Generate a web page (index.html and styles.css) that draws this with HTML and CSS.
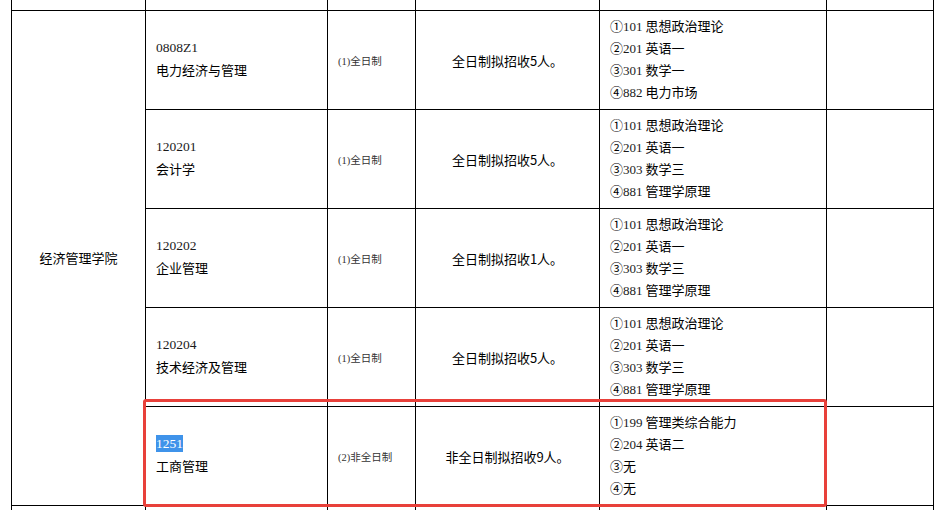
FILE: index.html
```html
<!DOCTYPE html>
<html lang="zh-CN">
<head>
<meta charset="utf-8">
<title>招生专业目录</title>
<link rel="stylesheet" href="styles.css">
</head>
<body>
<div class="wrap">
  <div class="grid">
    <div class="c"></div><div class="c"></div><div class="c"></div><div class="c"></div><div class="c"></div><div class="c"></div>

    <div class="c college">经济管理学院</div>

    <div class="c major"><span class="ln code">0808Z1</span><span class="ln">电力经济与管理</span></div>
    <div class="c mode">(1)全日制</div>
    <div class="c plan">全日制拟招收5人。</div>
    <div class="c exams"><span class="ln">①<span class="num">101</span> 思想政治理论</span><span class="ln">②<span class="num">201</span> 英语一</span><span class="ln">③<span class="num">301</span> 数学一</span><span class="ln">④<span class="num">882</span> 电力市场</span></div>
    <div class="c"></div>

    <div class="c major"><span class="ln code">120201</span><span class="ln">会计学</span></div>
    <div class="c mode">(1)全日制</div>
    <div class="c plan">全日制拟招收5人。</div>
    <div class="c exams"><span class="ln">①<span class="num">101</span> 思想政治理论</span><span class="ln">②<span class="num">201</span> 英语一</span><span class="ln">③<span class="num">303</span> 数学三</span><span class="ln">④<span class="num">881</span> 管理学原理</span></div>
    <div class="c"></div>

    <div class="c major"><span class="ln code">120202</span><span class="ln">企业管理</span></div>
    <div class="c mode">(1)全日制</div>
    <div class="c plan">全日制拟招收1人。</div>
    <div class="c exams"><span class="ln">①<span class="num">101</span> 思想政治理论</span><span class="ln">②<span class="num">201</span> 英语一</span><span class="ln">③<span class="num">303</span> 数学三</span><span class="ln">④<span class="num">881</span> 管理学原理</span></div>
    <div class="c"></div>

    <div class="c major"><span class="ln code">120204</span><span class="ln">技术经济及管理</span></div>
    <div class="c mode">(1)全日制</div>
    <div class="c plan">全日制拟招收5人。</div>
    <div class="c exams"><span class="ln">①<span class="num">101</span> 思想政治理论</span><span class="ln">②<span class="num">201</span> 英语一</span><span class="ln">③<span class="num">303</span> 数学三</span><span class="ln">④<span class="num">881</span> 管理学原理</span></div>
    <div class="c"></div>

    <div class="c major"><span class="ln code"><span class="sel">1251</span></span><span class="ln">工商管理</span></div>
    <div class="c mode">(2)非全日制</div>
    <div class="c plan">非全日制拟招收9人。</div>
    <div class="c exams"><span class="ln">①<span class="num">199</span> 管理类综合能力</span><span class="ln">②<span class="num">204</span> 英语二</span><span class="ln">③无</span><span class="ln">④无</span></div>
    <div class="c"></div>

    <div class="c"></div><div class="c"></div><div class="c"></div><div class="c"></div><div class="c"></div><div class="c"></div>
  </div>
  <div class="mark"></div>
</div>
</body>
</html>
```

FILE: styles.css
```css
html, body {
  margin: 0;
  padding: 0;
  background: #ffffff;
  overflow: hidden;
}
body {
  font-family: "Noto Sans CJK SC", sans-serif;
  font-size: 13px;
  color: #000;
}
.wrap {
  position: relative;
  width: 935px;
  height: 510px;
  overflow: hidden;
}
.grid {
  margin-left: 11px;
  width: max-content;
  display: grid;
  grid-template-columns: 133px 181px 87px 183px 226px 106px;
  grid-template-rows: 10px repeat(5, 98px) 20px;
  gap: 1px;
  padding: 0 1px;
  background: #000;
}
.c {
  background: #fff;
  min-width: 0;
  overflow: hidden;
}
.college {
  grid-column: 1;
  grid-row: 2 / 7;
  display: flex;
  align-items: center;
  justify-content: center;
  padding-bottom: 2px;
}
.major {
  display: flex;
  flex-direction: column;
  justify-content: center;
  padding-left: 10px;
  padding-bottom: 3px;
}
.exams {
  display: flex;
  flex-direction: column;
  justify-content: center;
  padding-left: 10px;
  padding-bottom: 2px;
}
.ln {
  display: block;
  height: 22px;
  line-height: 22px;
  white-space: nowrap;
}
.code {
  font-family: "Liberation Serif", serif;
  font-size: 13.5px;
  color: #1a1a1a;
}
.sel {
  background: #3f93ea;
  color: #fff;
  padding: 1px 0;
}
.mode {
  display: flex;
  align-items: center;
  padding-left: 10px;
  font-size: 10.5px;
  color: #333;
  font-family: "Liberation Serif", "Noto Sans CJK SC", serif;
}
.plan {
  display: flex;
  align-items: center;
  justify-content: center;
}
.num {
  font-family: "Liberation Serif", serif;
  line-height: 1;
  color: #1a1a1a;
}
.mark {
  position: absolute;
  left: 143px;
  top: 399px;
  width: 678px;
  height: 102px;
  border: 3px solid #e8403a;
  border-radius: 3px;
}
```
